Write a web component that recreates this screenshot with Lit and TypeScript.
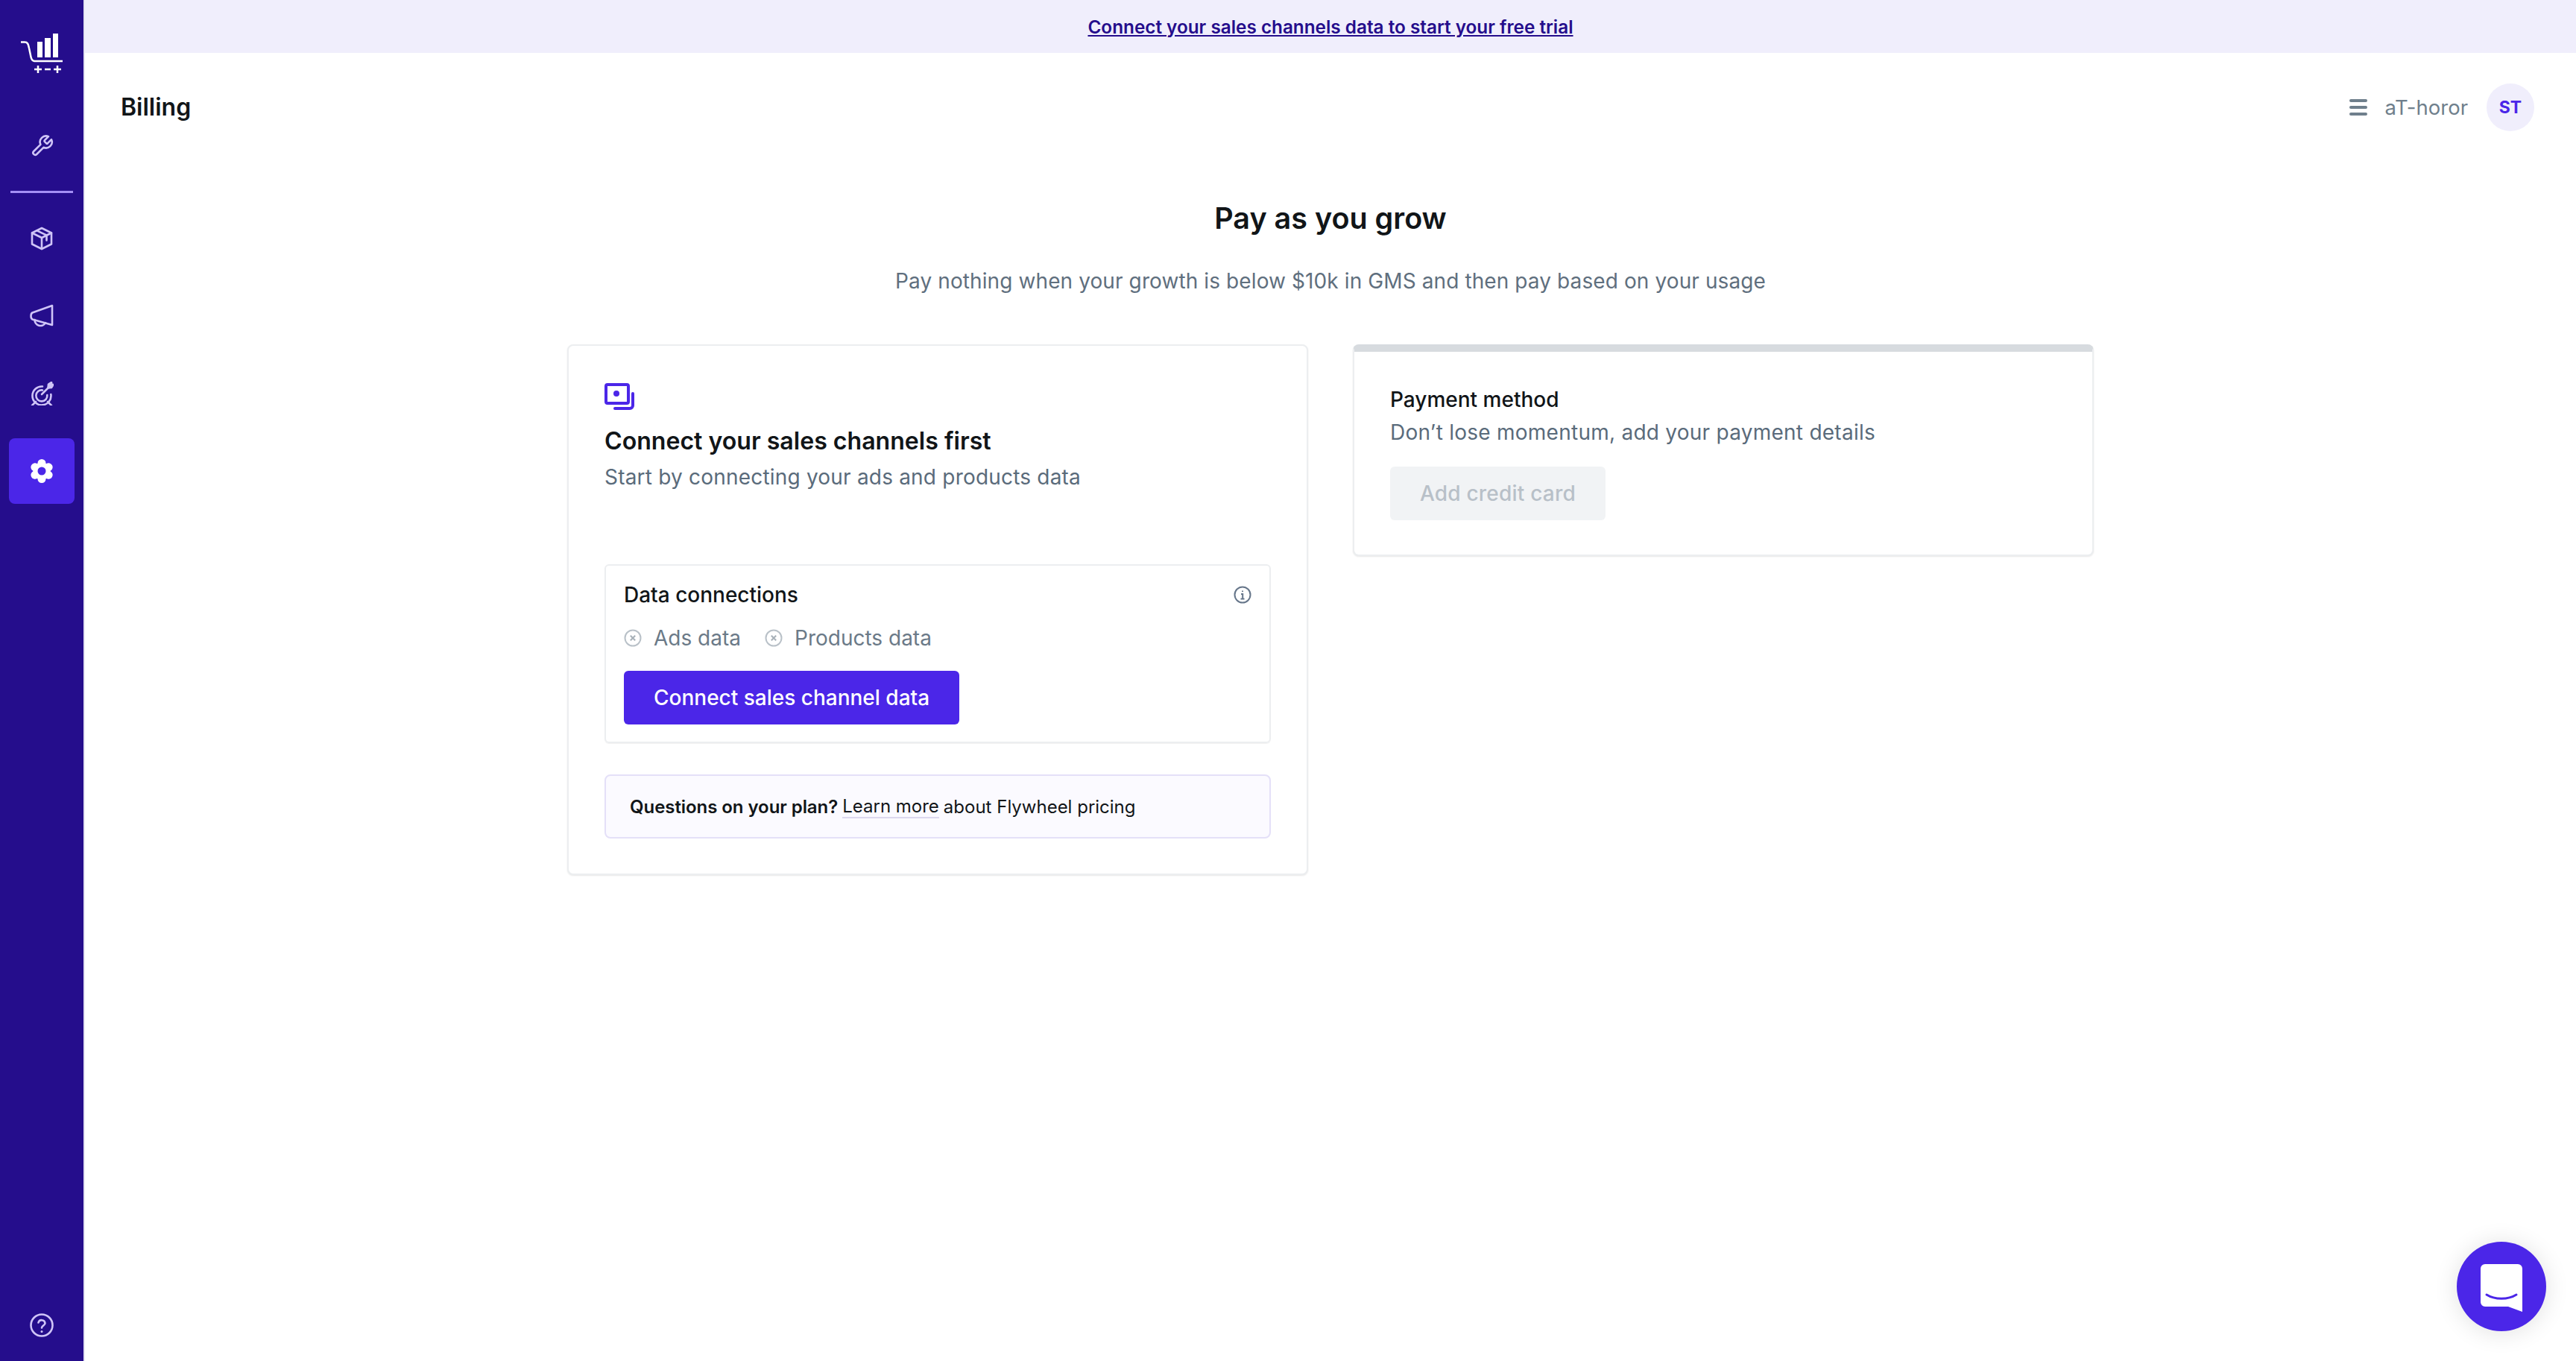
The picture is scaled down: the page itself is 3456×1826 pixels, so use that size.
import { LitElement, css, html, svg } from 'lit'
import { customElement } from 'lit/decorators.js'

const stroke = (body: unknown, view = 32) => html`<svg class="icon" viewBox="0 0 ${view} ${view}" fill="none" stroke="currentColor" stroke-width="2.600" stroke-linecap="round" stroke-linejoin="round">${body}</svg>`

const wrench = stroke(svg`<path d="M20 8.200a1.400 1.400 0 0 0 0 1.900l2.100 2.100a1.400 1.400 0 0 0 1.900 0l5-5a8 8 0 0 1-10.600 10.600l-9.200 9.200a2.830 2.830 0 0 1-4-4l9.200-9.200A8 8 0 0 1 25 3.200z"/>`)
const box = stroke(svg`<path d="M16 2 29 8.500v15L16 30 3 23.500v-15z"/><path d="M3 8.500 16 15l13-6.500M16 15v15"/><path d="M9.500 5.300 22.500 11.700v6.800"/>`)
const megaphone = stroke(svg`<path d="M30 2v26L3.500 20.500Q1.500 19.500 1.500 16T3.500 11.500z"/><path d="M6.500 21a7.800 7.800 0 0 0 14.500 4.200"/>`)
const target = stroke(svg`<path d="M17 6.500A12.500 12.500 0 1 0 28.300 17"/><path d="M17 11.500A7.500 7.500 0 1 0 23.300 18"/><path d="M16 17 26 7"/><path d="M24.500 8.500 25 3.500 29 1l.3 2.700 2.200.3-2.500 4z" fill="currentColor"/><path d="M8 27 3 32M24 27l5 5"/>`)
const help = stroke(svg`<circle cx="16" cy="16" r="14.500"/><path d="M11.500 12.500a4.600 4.600 0 0 1 9 .8c0 3-4.500 3.500-4.500 6.200"/><path d="M16 24.500v.1" stroke-width="3"/>`)

const gear = html`<svg class="icon" viewBox="0 0 32 32">
  <g fill="#fff">
    <circle cx="16" cy="16" r="11.500"/>
    <rect x="10.500" y="0" width="11" height="32" rx="5.500"/>
    <rect x="10.500" y="0" width="11" height="32" rx="5.500" transform="rotate(60 16 16)"/>
    <rect x="10.500" y="0" width="11" height="32" rx="5.500" transform="rotate(120 16 16)"/>
  </g>
  <circle cx="16" cy="16" r="5.500" fill="#4b26e8"/>
</svg>`

const logo = html`<svg class="logo" viewBox="0 0 56 54" fill="none" stroke="#fff" stroke-width="2.500">
  <path d="M0 11.500h5c4 0 5 2.500 6 8l2.500 12c.6 2.800 1.800 5 4.500 5.500h38" stroke-linecap="round"/>
  <path fill="#fff" stroke="none" d="M22 11h7v21h-7zM32 6h8v26h-8zM43 0h7v32h-7z"/>
  <path d="M18 48h10M23 43v10M32 48h8M44 48h10M49 43v10"/>
</svg>`

const xCircle = html`<svg class="status-icon" viewBox="0 0 24 24" fill="none" stroke="#b9c1c8" stroke-width="2">
  <circle cx="12" cy="12" r="10.500"/><path d="m8.800 8.800 6.400 6.400m0-6.400-6.400 6.400" stroke="#a7b0b8"/>
</svg>`

const info = html`<svg class="info" viewBox="0 0 24 24" fill="none" stroke="#66768a" stroke-width="2">
  <circle cx="12" cy="12" r="10.500"/><path d="M10 11h2.200v6.500M9.500 17.500h5"/><path d="M12 6.500v1.500"/>
</svg>`

@customElement("app-root")
export class AppRoot extends LitElement {
  render() {
    return html`
      <aside class="rail">
        <div class="rail-logo">${logo}</div>
        <a class="rail-item">${wrench}</a>
        <div class="rail-rule"></div>
        <a class="rail-item">${box}</a>
        <a class="rail-item">${megaphone}</a>
        <a class="rail-item">${target}</a>
        <a class="rail-item active">${gear}</a>
        <a class="rail-item help">${help}</a>
      </aside>

      <main class="main">
        <div class="banner"><a>Connect your sales channels data to start your free trial</a></div>

        <header class="topbar">
          <h1>Billing</h1>
          <div class="account">
            <span class="burger"><i></i><i></i><i></i></span>
            <span class="account-name">aT-horor</span>
            <span class="avatar">ST</span>
          </div>
        </header>

        <section class="intro">
          <h2>Pay as you grow</h2>
          <p>Pay nothing when your growth is below $10k in GMS and then pay based on your usage</p>
        </section>

        <section class="columns">
          <div class="card connect">
            <svg class="card-icon" viewBox="0 0 40 36" fill="none" stroke="#4b26e8" stroke-width="4">
              <rect x="2" y="2" width="30" height="25" rx="2"/>
              <path d="M38 14v16a4 4 0 0 1-4 4H14" stroke-linecap="round"/>
              <circle cx="16" cy="14" r="4" fill="#4b26e8" stroke="none"/>
            </svg>
            <h3>Connect your sales channels first</h3>
            <p class="lead">Start by connecting your ads and products data</p>

            <div class="connections">
              <div class="connections-head">
                <span>Data connections</span>
                ${info}
              </div>
              <div class="statuses">
                <span class="status">${xCircle}Ads data</span>
                <span class="status">${xCircle}Products data</span>
              </div>
              <button class="btn">Connect sales channel data</button>
            </div>

            <div class="questions">
              <b>Questions on your plan?</b> <a>Learn more</a> about Flywheel pricing
            </div>
          </div>

          <div class="card payment">
            <h4>Payment method</h4>
            <p class="lead">Don’t lose momentum, add your payment details</p>
            <button class="btn disabled">Add credit card</button>
          </div>
        </section>
      </main>

      <button class="chat">
        <svg viewBox="0 0 56 64" width="56" height="64">
          <path fill="#fff" d="M6 0h44a6 6 0 0 1 6 6v58l-19-7H6a6 6 0 0 1-6-6V6a6 6 0 0 1 6-6z"/>
          <path d="M8 41c11 7 29 7 40 0" fill="none" stroke="#4b26e8" stroke-width="3" stroke-linecap="round"/>
        </svg>
      </button>
    `;
  }

  static styles = css`
    :host {
      display: flex;
      min-height: 100vh;
      font-family: "Inter", "Liberation Sans", sans-serif;
      color: #111518;
      background: #fff;
    }

    .rail {
      box-sizing: content-box;
      width: 112px;
      flex: none;
      display: flex;
      flex-direction: column;
      align-items: center;
      background: #250d8c;
      border-right: 2px solid #e4e3f2;
    }
    .rail-logo {
      height: 144px;
      margin-bottom: 8px;
      display: flex;
      padding-top: 45px;
      box-sizing: border-box;
    }
    .logo {
      width: 56px;
      height: 54px;
    }
    .rail-item {
      width: 88px;
      height: 88px;
      display: flex;
      align-items: center;
      justify-content: center;
      color: #cfc4f7;
      border-radius: 8px;
      margin-bottom: 16px;
    }
    .rail-item.active {
      background: #4b26e8;
    }
    .rail-item.help {
      margin: auto 0 4px;
    }
    .rail-rule {
      width: 84px;
      height: 3px;
      background: #a48ff5;
      margin: 0 0 17px;
    }
    .icon {
      width: 32px;
      height: 32px;
    }

    .main {
      flex: 1;
      min-width: 0;
    }
    .banner {
      height: 71px;
      display: flex;
      align-items: center;
      justify-content: center;
      background: #f0eefc;
      font-size: 24.300px;
      font-weight: 600;
      color: #250d8c;
    }
    .banner a {
      text-decoration: underline;
    }

    .topbar {
      display: flex;
      align-items: center;
      justify-content: space-between;
      padding: 41px 56px 0 48px;
    }
    h1 {
      margin: 0;
      font-size: 32px;
      font-weight: 600;
      line-height: 64px;
    }
    .account {
      display: flex;
      align-items: center;
    }
    .burger {
      display: flex;
      flex-direction: column;
      gap: 5px;
      width: 24px;
      margin-right: 24px;
    }
    .burger i {
      height: 4px;
      border-radius: 2px;
      background: #6f7f8c;
    }
    .account-name {
      font-size: 27.500px;
      color: #6f7f8c;
      margin-right: 25px;
    }
    .avatar {
      width: 64px;
      height: 64px;
      border-radius: 50%;
      background: #f0eefc;
      color: #4b26e8;
      display: flex;
      align-items: center;
      justify-content: center;
      font-size: 23px;
      font-weight: 700;
    }

    .intro {
      text-align: center;
      padding-top: 92px;
    }
    h2 {
      margin: 0;
      font-size: 39.500px;
      font-weight: 600;
      line-height: 50px;
    }
    .intro p {
      margin: 42px 0 0;
      font-size: 28px;
      letter-spacing: 0.1px;
      line-height: 34px;
      color: #5f6f7e;
    }

    .columns {
      display: grid;
      grid-template-columns: 994px 994px;
      justify-content: center;
      gap: 60px;
      align-items: start;
      margin-top: 68px;
    }
    .card {
      box-sizing: border-box;
      background: #fff;
      border: 2px solid #eceef0;
      border-radius: 8px;
      box-shadow: 0 1px 2px rgba(17, 21, 24, 0.1);
    }
    .card.connect {
      height: 712px;
      padding: 50px 48px 0;
    }
    .card-icon {
      display: block;
      width: 40px;
      height: 36px;
    }
    h3 {
      margin: 20px 0 0;
      font-size: 32.100px;
      line-height: 44px;
      font-weight: 600;
    }
    .lead {
      margin: 4px 0 0;
      font-size: 28px;
      letter-spacing: 0.2px;
      line-height: 44px;
      color: #5a6b7b;
    }

    .connections {
      box-sizing: border-box;
      height: 240px;
      margin-top: 95px;
      padding: 0 24px;
      border: 2px solid #eceef0;
      border-radius: 6px;
      box-shadow: 0 1px 1px rgba(17, 21, 24, 0.06);
    }
    .connections-head {
      display: flex;
      align-items: center;
      justify-content: space-between;
      height: 77px;
      font-size: 28px;
      font-weight: 500;
    }
    .info {
      width: 24px;
      height: 24px;
    }
    .statuses {
      display: flex;
      gap: 32px;
      height: 40px;
      align-items: center;
      font-size: 28px;
      color: #6b7a88;
    }
    .status {
      display: flex;
      align-items: center;
      gap: 16px;
    }
    .status-icon {
      width: 24px;
      height: 24px;
    }
    .btn {
      display: block;
      height: 72px;
      margin: 24px 0 0;
      padding: 0 40px;
      border: 0;
      border-radius: 6px;
      background: #4b26e8;
      color: #fff;
      font: 500 28px "Inter", "Liberation Sans", sans-serif;
    }
    .btn.disabled {
      background: #f1f3f5;
      color: #b8c0c8;
      letter-spacing: 0.2px;
    }

    .questions {
      box-sizing: border-box;
      height: 86px;
      margin-top: 42px;
      padding: 0 32px;
      display: flex;
      align-items: center;
      gap: 6px;
      font-size: 24px;
      background: #fbfaff;
      border: 2px solid #e4e0f8;
      border-radius: 8px;
    }
    .questions b {
      font-weight: 600;
      letter-spacing: -0.06px;
    }
    .questions a {
      border-bottom: 2px solid #dcd8ee;
    }

    .card.payment {
      height: 284px;
      padding: 42px 48px 0;
      border-top: 10px solid #d7dbdf;
    }
    h4 {
      margin: 0;
      font-size: 28px;
      line-height: 44px;
      font-weight: 500;
    }
    .payment .lead {
      margin: 0;
      font-size: 28px;
      letter-spacing: 0.25px;
    }
    .payment .btn {
      margin-top: 24px;
    }

    .chat {
      position: fixed;
      right: 40px;
      bottom: 40px;
      width: 120px;
      height: 120px;
      padding: 4px 0 0;
      border: 0;
      border-radius: 50%;
      background: #4b26e8;
      box-shadow: 0 2px 32px rgba(0, 0, 0, 0.12);
      display: flex;
      align-items: center;
      justify-content: center;
    }
  `;
}

declare global {
  interface HTMLElementTagNameMap {
    "app-root": AppRoot,
  }
}
